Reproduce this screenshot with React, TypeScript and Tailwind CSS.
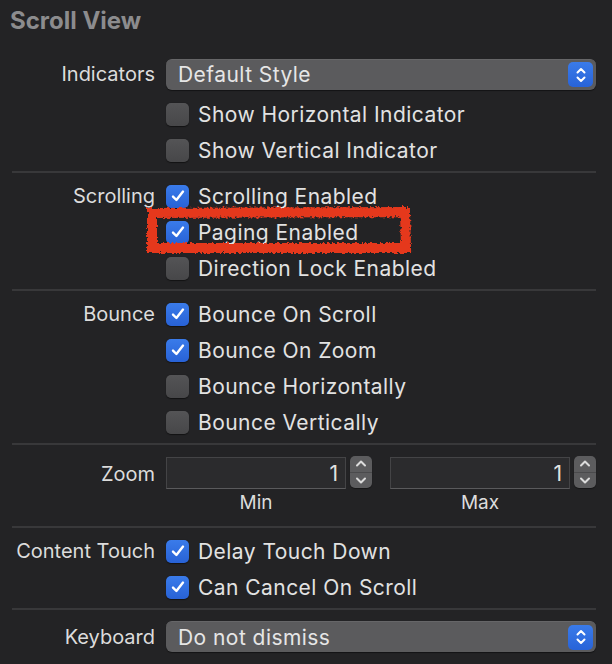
import React from "react";

const font = "font-['Inter','Noto_Sans',sans-serif]";

function Check({ on }: { on: boolean }) {
  if (!on) {
    return (
      <div className="w-[23px] h-[23px] shrink-0 rounded-[5px] bg-gradient-to-b from-[#545456] to-[#474749] shadow-[0_0.5px_1px_rgba(0,0,0,0.5)]" />
    );
  }
  return (
    <div className="w-[23px] h-[23px] shrink-0 rounded-[5px] bg-gradient-to-b from-[#3a7bea] to-[#2862d6] flex items-center justify-center shadow-[0_0.5px_1px_rgba(0,0,0,0.5)]">
      <svg width="16" height="16" viewBox="0 0 16 16" fill="none">
        <path d="M3 8.6 L6.4 12 L13 3.6" stroke="white" strokeWidth="2.4" strokeLinecap="round" strokeLinejoin="round" />
      </svg>
    </div>
  );
}

function CheckRow({ label, text, on }: { label?: string; text: string; on: boolean }) {
  return (
    <div className="grid grid-cols-[155px_1fr] gap-x-[11px] h-[36px] items-center pr-[16px]">
      <div className="text-right text-[20px] text-[#dcdcdc] leading-none">{label}</div>
      <div className="flex items-center gap-[9px]">
        <Check on={on} />
        <span className="text-[21px] tracking-[0.45px] text-[#e2e2e2] leading-none">{text}</span>
      </div>
    </div>
  );
}

function Popup({ value }: { value: string }) {
  return (
    <div className="h-[31px] rounded-[6px] bg-[#5b5b5d] border-t border-[#666668] shadow-[0_1px_1px_rgba(0,0,0,0.45)] flex items-center justify-between pl-[12px] pr-[3px]">
      <span className="text-[21px] tracking-[0.45px] text-[#e6e6e6] leading-none">{value}</span>
      <div className="w-[25px] h-[25px] rounded-[5px] bg-gradient-to-b from-[#3a7bea] to-[#2863d8] flex items-center justify-center">
        <svg width="12" height="18" viewBox="0 0 12 18" fill="none">
          <path d="M2.5 6.5 L6 3 L9.5 6.5" stroke="white" strokeWidth="2" strokeLinecap="round" strokeLinejoin="round" />
          <path d="M2.5 11.5 L6 15 L9.5 11.5" stroke="white" strokeWidth="2" strokeLinecap="round" strokeLinejoin="round" />
        </svg>
      </div>
    </div>
  );
}

function Stepper() {
  return (
    <div className="w-[22px] h-[32px] rounded-[5px] bg-[#5c5c5e] flex flex-col shadow-[0_1px_1px_rgba(0,0,0,0.4)]">
      <div className="flex-1 flex items-center justify-center border-b border-[#4a4a4c]">
        <svg width="14" height="9" viewBox="0 0 14 9" fill="none">
          <path d="M3 6.5 L7 2.5 L11 6.5" stroke="#dcdcdc" strokeWidth="2" strokeLinecap="round" strokeLinejoin="round" />
        </svg>
      </div>
      <div className="flex-1 flex items-center justify-center">
        <svg width="14" height="9" viewBox="0 0 14 9" fill="none">
          <path d="M3 2.5 L7 6.5 L11 2.5" stroke="#dcdcdc" strokeWidth="2" strokeLinecap="round" strokeLinejoin="round" />
        </svg>
      </div>
    </div>
  );
}

function NumberField({ caption }: { caption: string }) {
  return (
    <div className="flex flex-col">
      <div className="flex items-start gap-[4px]">
        <div className="w-[180px] h-[32px] mt-[1px] bg-[#2b2b2d] border border-[#444446] border-b-[#5a5a5c] flex items-center justify-end pr-[7px]">
          <span className="text-[21px] text-[#e2e2e2] leading-none">1</span>
        </div>
        <Stepper />
      </div>
      <div className="w-[180px] h-[26px] flex items-center justify-center text-[19px] text-[#dcdcdc] leading-none">
        {caption}
      </div>
    </div>
  );
}

function Divider() {
  return <div className="h-[2px] ml-[12px] mr-[16px] bg-[#38383a]" />;
}

export default function App() {
  return (
    <div className={`relative w-[612px] h-[664px] overflow-hidden bg-[#232325] ${font}`}>
      {/* Header */}
      <div className="h-[56px] pl-[10px] pt-[7px]">
        <h1 className="text-[24px] font-bold text-[#8c8c8e] leading-[28px]">Scroll View</h1>
      </div>

      <div className="grid grid-cols-[155px_1fr] gap-x-[11px] h-[36px] items-center pr-[16px] mb-[4px]">
        <div className="text-right text-[20px] text-[#dcdcdc] leading-none">Indicators</div>
        <Popup value="Default Style" />
      </div>
      <CheckRow text="Show Horizontal Indicator" on={false} />
      <CheckRow text="Show Vertical Indicator" on={false} />
      <div className="h-[3px]" />
      <Divider />

      <div className="pt-[5px] pb-[3px]">
        <CheckRow label="Scrolling" text="Scrolling Enabled" on />
        <CheckRow text="Paging Enabled" on />
        <CheckRow text="Direction Lock Enabled" on={false} />
      </div>
      <Divider />

      <div className="pt-[5px] pb-[3px]">
        <CheckRow label="Bounce" text="Bounce On Scroll" on />
        <CheckRow text="Bounce On Zoom" on />
        <CheckRow text="Bounce Horizontally" on={false} />
        <CheckRow text="Bounce Vertically" on={false} />
      </div>
      <Divider />

      <div className="pt-[11px] pb-[11px] grid grid-cols-[155px_1fr] gap-x-[11px] pr-[16px]">
        <div className="h-[36px] flex items-center justify-end text-[20px] text-[#dcdcdc] leading-none">Zoom</div>
        <div className="flex gap-[18px]">
          <NumberField caption="Min" />
          <NumberField caption="Max" />
        </div>
      </div>
      <Divider />

      <div className="pt-[5px] pb-[3px]">
        <CheckRow label="Content Touch" text="Delay Touch Down" on />
        <CheckRow text="Can Cancel On Scroll" on />
      </div>
      <Divider />

      <div className="pt-[11px] grid grid-cols-[155px_1fr] gap-x-[11px] h-[31px] items-center pr-[16px] box-content">
        <div className="text-right text-[20px] text-[#dcdcdc] leading-none">Keyboard</div>
        <Popup value="Do not dismiss" />
      </div>

      {/* hand-drawn red annotation */}
      <svg className="absolute left-[140px] top-[200px]" width="280" height="62" viewBox="0 0 280 62">
        <defs>
          <filter id="rough" x="-5%" y="-20%" width="110%" height="140%">
            <feTurbulence type="fractalNoise" baseFrequency="0.4" numOctaves="2" seed="3" />
            <feDisplacementMap in="SourceGraphic" scale="5" />
          </filter>
        </defs>
        <path
          d="M12 13 L265 12 L266 48 L12 48 Z"
          fill="none"
          stroke="#e5391f"
          strokeWidth="10"
          filter="url(#rough)"
        />
      </svg>
    </div>
  );
}
